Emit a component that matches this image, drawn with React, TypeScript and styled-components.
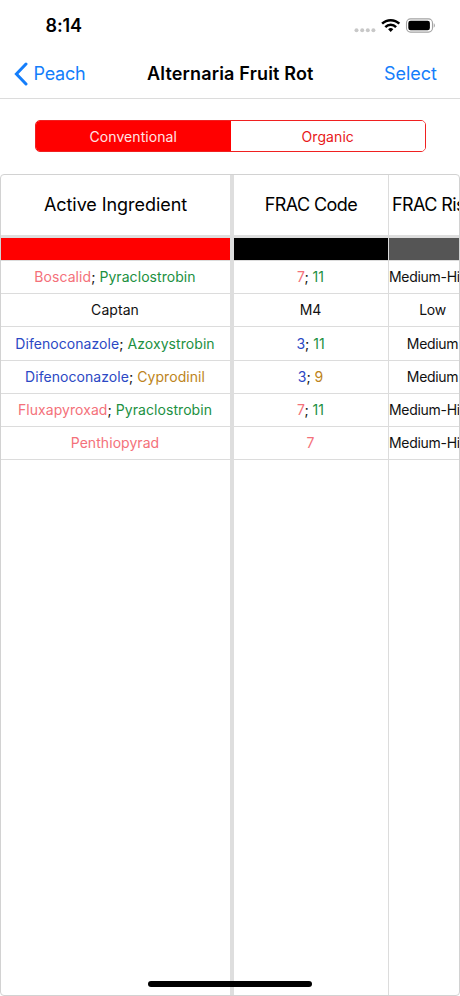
import React, { useState } from 'react'
import styled, { createGlobalStyle } from 'styled-components'

type Tone = 'black' | 'pink' | 'green' | 'blue' | 'amber'

interface Part {
    text: string
    tone: Tone
}

interface Treatment {
    ingredients: Part[]
    codes: Part[]
    risk: string
}

const tones: Record<Tone, string> = {
    black: '#111111',
    pink: '#f4717a',
    green: '#21903f',
    blue: '#2b48c4',
    amber: '#bd8420',
}

const treatments: Treatment[] = [
    {
        ingredients: [
            { text: 'Boscalid', tone: 'pink' },
            { text: 'Pyraclostrobin', tone: 'green' },
        ],
        codes: [
            { text: '7', tone: 'pink' },
            { text: '11', tone: 'green' },
        ],
        risk: 'Medium-High',
    },
    {
        ingredients: [{ text: 'Captan', tone: 'black' }],
        codes: [{ text: 'M4', tone: 'black' }],
        risk: 'Low',
    },
    {
        ingredients: [
            { text: 'Difenoconazole', tone: 'blue' },
            { text: 'Azoxystrobin', tone: 'green' },
        ],
        codes: [
            { text: '3', tone: 'blue' },
            { text: '11', tone: 'green' },
        ],
        risk: 'Medium',
    },
    {
        ingredients: [
            { text: 'Difenoconazole', tone: 'blue' },
            { text: 'Cyprodinil', tone: 'amber' },
        ],
        codes: [
            { text: '3', tone: 'blue' },
            { text: '9', tone: 'amber' },
        ],
        risk: 'Medium',
    },
    {
        ingredients: [
            { text: 'Fluxapyroxad', tone: 'pink' },
            { text: 'Pyraclostrobin', tone: 'green' },
        ],
        codes: [
            { text: '7', tone: 'pink' },
            { text: '11', tone: 'green' },
        ],
        risk: 'Medium-High',
    },
    {
        ingredients: [{ text: 'Penthiopyrad', tone: 'pink' }],
        codes: [{ text: '7', tone: 'pink' }],
        risk: 'Medium-High',
    },
]

const segments = ['Conventional', 'Organic']

const Parts: React.FC<{ parts: Part[] }> = ({ parts }) => (
    <span>
        {parts.map((part, index) => (
            <React.Fragment key={part.text}>
                {index > 0 && '; '}
                <Toned $tone={part.tone}>{part.text}</Toned>
            </React.Fragment>
        ))}
    </span>
)

const StatusIcons: React.FC = () => (
    <svg width="82" height="18" viewBox="0 0 82 18">
        <g fill="#c8c8c8">
            <circle cx="3.5" cy="13.3" r="2" />
            <circle cx="9.2" cy="13.3" r="2" />
            <circle cx="14.8" cy="13.3" r="2" />
            <circle cx="20.4" cy="13.3" r="2" />
        </g>
        <g fill="none" stroke="#000" strokeWidth="2.5">
            <path d="M29.1 6.7a12.4 12.4 0 0 1 17.2 0" />
            <path d="M32.3 10.1a7.6 7.6 0 0 1 10.8 0" />
        </g>
        <path d="M37.7 15l-2.6-2.7a3.7 3.7 0 0 1 5.2 0z" fill="#000" />
        <rect
            x="53.5"
            y="1.9"
            width="26"
            height="13.2"
            rx="4"
            fill="none"
            stroke="#a3a3a3"
            strokeWidth="1.1"
        />
        <rect x="55.3" y="3.7" width="21.6" height="9.6" rx="2.3" />
        <path d="M80.7 6.3v4.4c1.6-.7 1.6-3.7 0-4.4z" fill="#a3a3a3" />
    </svg>
)

export default function App() {
    const [segment, setSegment] = useState(segments[0])

    return (
        <Screen>
            <GlobalStyle />
            <StatusBar>
                <Time>8:14</Time>
                <StatusIcons />
            </StatusBar>

            <NavBar>
                <BackButton>
                    <svg width="14" height="24" viewBox="0 0 14 24">
                        <path
                            d="M12 2L2.4 12l9.6 10"
                            fill="none"
                            stroke="#147efb"
                            strokeWidth="3"
                            strokeLinecap="round"
                        />
                    </svg>
                    Peach
                </BackButton>
                <Title>Alternaria Fruit Rot</Title>
                <SelectButton>Select</SelectButton>
            </NavBar>

            <SegmentedControl>
                {segments.map((name) => (
                    <Segment
                        key={name}
                        $active={name === segment}
                        onClick={() => setSegment(name)}
                    >
                        {name}
                    </Segment>
                ))}
            </SegmentedControl>

            <Table>
                <Column $width={229}>
                    <HeaderCell $spacing={-0.06}>Active Ingredient</HeaderCell>
                    <Swatch $color="#ff0000" />
                    {treatments.map((item, index) => (
                        <Cell key={index} $spacing={0.06}>
                            <Parts parts={item.ingredients} />
                        </Cell>
                    ))}
                </Column>
                <PinnedDivider />
                <Scroller>
                    <Column $width={154}>
                        <HeaderCell $spacing={-0.6}>FRAC Code</HeaderCell>
                        <Swatch $color="#000000" />
                        {treatments.map((item, index) => (
                            <Cell key={index}>
                                <Parts parts={item.codes} />
                            </Cell>
                        ))}
                    </Column>
                    <ColumnLine />
                    <Column $width={86}>
                        <HeaderCell $spacing={-0.6}>FRAC Risk</HeaderCell>
                        <Swatch $color="#555555" />
                        {treatments.map((item, index) => (
                            <Cell key={index} $spacing={-0.3}>
                                {item.risk}
                            </Cell>
                        ))}
                    </Column>
                </Scroller>
            </Table>
            <HomeIndicator />
        </Screen>
    )
}

const GlobalStyle = createGlobalStyle`
    body {
        margin: 0;
        background: #ffffff;
    }

    * {
        box-sizing: border-box;
    }
`

const Screen = styled.div`
    position: relative;
    display: flex;
    flex-direction: column;
    width: 460px;
    height: 996px;
    overflow: hidden;
    background: #ffffff;
    color: #000000;
    font-family: Inter, 'Liberation Sans', sans-serif;
`

const StatusBar = styled.div`
    display: flex;
    justify-content: space-between;
    align-items: center;
    height: 50px;
    padding: 1px 25px 0 45.5px;
`

const Time = styled.span`
    font-size: 18px;
    font-weight: 600;
    letter-spacing: -0.1px;
`

const NavBar = styled.div`
    display: grid;
    grid-template-columns: 133px auto 1fr;
    align-items: center;
    height: 49px;
    padding: 0 23px 1px 14px;
    border-bottom: 1px solid #dcdcdc;
    font-size: 18px;
`

const NavButton = styled.button`
    display: flex;
    align-items: center;
    padding: 0;
    border: 0;
    background: none;
    color: #147efb;
    font: inherit;
`

const BackButton = styled(NavButton)`
    column-gap: 5.5px;
    letter-spacing: -0.25px;
`

const SelectButton = styled(NavButton)`
    justify-content: flex-end;
`

const Title = styled.span`
    font-weight: 600;
    letter-spacing: 0.17px;
    white-space: nowrap;
`

const SegmentedControl = styled.div`
    display: flex;
    flex-shrink: 0;
    width: 391px;
    height: 32px;
    margin: 21px 0 22px 35px;
    border: 1px solid #f02020;
    border-radius: 5px;
    overflow: hidden;
`

const Segment = styled.button<{ $active: boolean }>`
    flex: 1;
    padding: 0;
    border: 0;
    background: ${({ $active }) => ($active ? '#ff0000' : '#ffffff')};
    color: ${({ $active }) => ($active ? '#ffe4e4' : '#e81818')};
    font-family: inherit;
    font-size: 14px;
    letter-spacing: 0.08px;
`

const Table = styled.div`
    display: flex;
    flex: 1;
    min-height: 0;
    border: 1px solid #d2d2d2;
    border-radius: 4px;
    overflow: hidden;
`

const Scroller = styled.div`
    display: flex;
    flex: 1;
    overflow: hidden;
`

const Column = styled.div<{ $width: number }>`
    flex: 0 0 ${({ $width }) => $width}px;
`

const PinnedDivider = styled.div`
    flex: 0 0 4px;
    background: #dedede;
`

const ColumnLine = styled.div`
    flex: 0 0 1px;
    background: #dcdcdc;
`

const HeaderCell = styled.div<{ $spacing: number }>`
    display: flex;
    align-items: center;
    justify-content: center;
    height: 63px;
    padding-bottom: 2px;
    border-bottom: 3px solid #dedede;
    font-size: 18px;
    letter-spacing: ${({ $spacing }) => $spacing}px;
    white-space: nowrap;
`

const Swatch = styled.div<{ $color: string }>`
    height: 23px;
    border-bottom: 1px solid #dcdcdc;
    background: ${({ $color }) => $color};
`

const Cell = styled.div<{ $spacing?: number }>`
    display: flex;
    align-items: center;
    justify-content: center;
    height: 33.2px;
    padding: 0 1px 0.6px 0;
    border-bottom: 1px solid #dcdcdc;
    color: #111111;
    font-size: 14px;
    letter-spacing: ${({ $spacing = 0 }) => $spacing}px;
    white-space: nowrap;
`

const Toned = styled.span<{ $tone: Tone }>`
    color: ${({ $tone }) => tones[$tone]};
`

const HomeIndicator = styled.div`
    position: absolute;
    bottom: 9px;
    left: 148px;
    width: 164px;
    height: 6px;
    border-radius: 3px;
    background: #000000;
`
